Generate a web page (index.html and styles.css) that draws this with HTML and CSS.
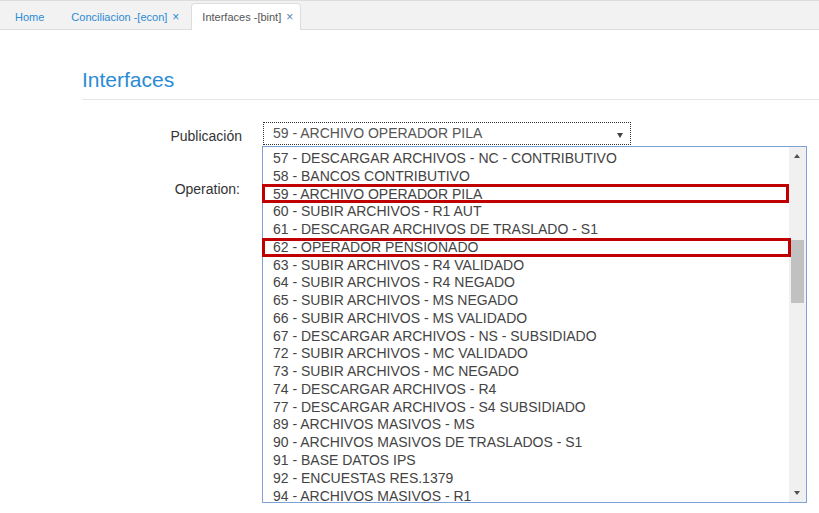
FILE: index.html
```html
<!DOCTYPE html>
<html lang="es">
<head>
<meta charset="utf-8">
<title>Interfaces</title>
<link rel="stylesheet" href="styles.css">
</head>
<body>
<div class="tabbar">
  <div class="tab tab-home"><span class="tab-label">Home</span></div>
  <div class="tab tab-second"><span class="tab-label">Conciliacion -[econ]</span><span class="tab-close">×</span></div>
  <div class="tab active"><span class="tab-label">Interfaces -[bint]</span><span class="tab-close">×</span></div>
</div>
<main class="content">
  <h1 class="page-title">Interfaces</h1>
  <div class="form">
    <label class="form-label">Publicación</label>
    <div class="field">
      <div class="select"><span>59 - ARCHIVO OPERADOR PILA</span><span class="caret"></span></div>
      <div class="listbox">
        <div class="options">
          <div class="option">57 - DESCARGAR ARCHIVOS - NC - CONTRIBUTIVO</div>
          <div class="option">58 - BANCOS CONTRIBUTIVO</div>
          <div class="option">59 - ARCHIVO OPERADOR PILA</div>
          <div class="option">60 - SUBIR ARCHIVOS - R1 AUT</div>
          <div class="option">61 - DESCARGAR ARCHIVOS DE TRASLADO - S1</div>
          <div class="option">62 - OPERADOR PENSIONADO</div>
          <div class="option">63 - SUBIR ARCHIVOS - R4 VALIDADO</div>
          <div class="option">64 - SUBIR ARCHIVOS - R4 NEGADO</div>
          <div class="option">65 - SUBIR ARCHIVOS - MS NEGADO</div>
          <div class="option">66 - SUBIR ARCHIVOS - MS VALIDADO</div>
          <div class="option">67 - DESCARGAR ARCHIVOS - NS - SUBSIDIADO</div>
          <div class="option">72 - SUBIR ARCHIVOS - MC VALIDADO</div>
          <div class="option">73 - SUBIR ARCHIVOS - MC NEGADO</div>
          <div class="option">74 - DESCARGAR ARCHIVOS - R4</div>
          <div class="option">77 - DESCARGAR ARCHIVOS - S4 SUBSIDIADO</div>
          <div class="option">89 - ARCHIVOS MASIVOS - MS</div>
          <div class="option">90 - ARCHIVOS MASIVOS DE TRASLADOS - S1</div>
          <div class="option">91 - BASE DATOS IPS</div>
          <div class="option">92 - ENCUESTAS RES.1379</div>
          <div class="option">94 - ARCHIVOS MASIVOS - R1</div>
        </div>
        <div class="scrollbar">
          <span class="arrow-up"></span>
          <span class="thumb"></span>
          <span class="arrow-down"></span>
        </div>
        <div class="mark mark-1"></div>
        <div class="mark mark-2"></div>
      </div>
    </div>
    <label class="form-label op">Operation:</label>
    <div class="field"></div>
  </div>
</main>
</body>
</html>
```

FILE: styles.css
```css
html, body {
  margin: 0;
  padding: 0;
  background: #fff;
  font-family: "Liberation Sans", Arial, sans-serif;
}

body {
  min-height: 513px;
}

.tabbar {
  display: flex;
  align-items: flex-end;
  height: 28px;
  background: #f2f2f2;
  border-top: 1px solid #dcdcdc;
  border-bottom: 1px solid #dddddd;
  padding-left: 4px;
}

.tab {
  display: flex;
  align-items: center;
  box-sizing: border-box;
  height: 27px;
  padding: 0 8px 0 11px;
  font-size: 11px;
  color: #2a8bd6;
  margin-bottom: -1px;
}

.tab-home { padding-right: 11px; }
.tab-second { margin-left: 5px; }

.tab.active {
  margin-left: 4px;
  background: #fff;
  border: 1px solid #dddddd;
  border-bottom: none;
  border-radius: 4px 4px 0 0;
  color: #555;
  padding-left: 10px;
  padding-right: 7px;
}

.tab-close {
  margin-left: 5px;
  font-size: 12px;
  color: #2a8bd6;
}

.tab.active .tab-close { color: #5b83ad; }

.content {
  padding-left: 82px;
}

.page-title {
  margin: 38px 0 0;
  font-size: 21px;
  font-weight: normal;
  line-height: 24px;
  color: #2a8bd4;
  padding-bottom: 7px;
  border-bottom: 1px solid #e5e5e5;
}

.form {
  display: grid;
  grid-template-columns: 160px 368px;
  column-gap: 21px;
  row-gap: 27px;
  margin-top: 22px;
}

.form-label {
  text-align: right;
  font-size: 14px;
  line-height: 23px;
  padding-top: 3px;
  color: #333;
}

.form-label.op { padding-right: 2px; }

.field {
  position: relative;
}

.select {
  display: flex;
  align-items: center;
  justify-content: space-between;
  box-sizing: border-box;
  height: 23px;
  padding: 0 7px 0 9px;
  border: 1px dotted #333;
  font-size: 14px;
  line-height: 21px;
  color: #555;
  background: #fff;
}

.caret {
  width: 0;
  height: 0;
  margin-top: 3px;
  border-left: 3px solid transparent;
  border-right: 3px solid transparent;
  border-top: 5px solid #444;
}

.listbox {
  position: absolute;
  left: -1px;
  top: 24px;
  width: 545px;
  height: 357px;
  box-sizing: border-box;
  border: 1px solid #7da2d6;
  background: #fff;
  display: flex;
  z-index: 5;
}

.options {
  flex: 1;
  padding-top: 3px;
  overflow: hidden;
}

.option {
  height: 17.78px;
  line-height: 17.78px;
  padding-left: 10px;
  font-size: 14px;
  color: #444;
  white-space: nowrap;
}

.scrollbar {
  position: relative;
  width: 17px;
  background: #f0f0f0;
}

.arrow-up, .arrow-down {
  position: absolute;
  left: 5px;
  width: 0;
  height: 0;
  border-left: 3.5px solid transparent;
  border-right: 3.5px solid transparent;
}

.arrow-up {
  top: 7px;
  border-bottom: 4px solid #505050;
}

.arrow-down {
  bottom: 7px;
  border-top: 4px solid #505050;
}

.thumb {
  position: absolute;
  left: 2px;
  top: 93px;
  width: 13px;
  height: 63px;
  background: #c1c1c1;
}

.mark {
  position: absolute;
  left: -1px;
  height: 19px;
  box-sizing: border-box;
  border: 3px solid #c00000;
}

.mark-1 {
  top: 37px;
  width: 527px;
}

.mark-2 {
  top: 91px;
  width: 529px;
}
```
